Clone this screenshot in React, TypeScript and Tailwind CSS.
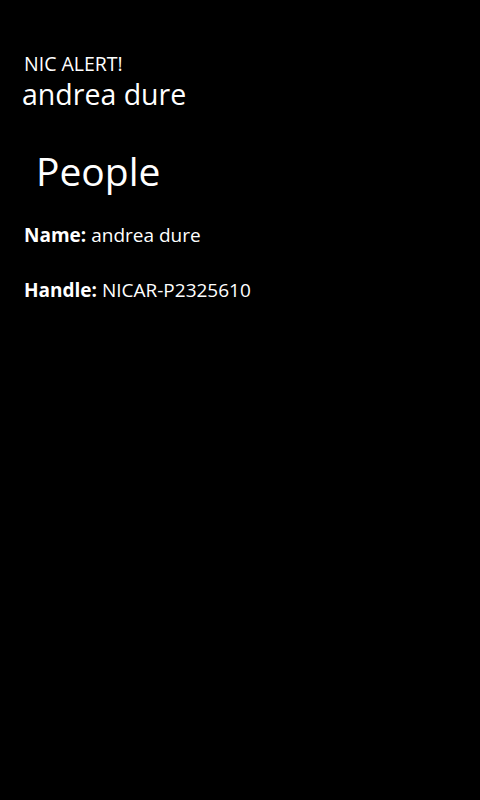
export default function App() {
  return (
    <div
      className="h-[800px] w-[480px] bg-black text-white"
      style={{ fontFamily: '"Open Sans", "Noto Sans", sans-serif' }}
    >
      <div className="pl-6 pt-[52px]">
        <div className="text-[19.5px] leading-[24px]">NIC ALERT!</div>
        <div className="-ml-0.5 text-[28.5px] leading-[36px]">andrea dure</div>
      </div>
      <div className="pl-9 pt-[33px] text-[39px] leading-[52px]">People</div>
      <div className="pl-6 pt-[26px] text-[19px] leading-[24px]">
        <div>
          <span className="font-bold">Name:</span> andrea dure
        </div>
        <div className="mt-[31px]">
          <span className="font-bold">Handle:</span> NICAR-P2325610
        </div>
      </div>
    </div>
  );
}
